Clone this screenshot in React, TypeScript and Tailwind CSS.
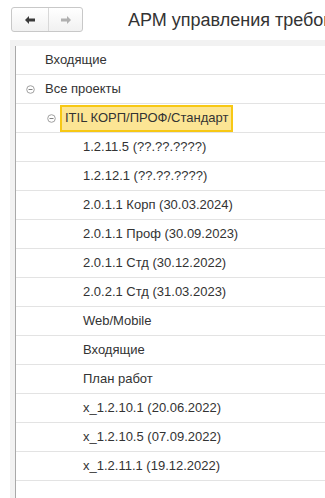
import React from 'react';

type Row = {
  label: string;
  level: number;
  toggle?: boolean;
  selected?: boolean;
};

const rows: Row[] = [
  { label: 'Входящие', level: 0 },
  { label: 'Все проекты', level: 0, toggle: true },
  { label: 'ITIL КОРП/ПРОФ/Стандарт', level: 1, toggle: true, selected: true },
  { label: '1.2.11.5 (??.??.????)', level: 2 },
  { label: '1.2.12.1 (??.??.????)', level: 2 },
  { label: '2.0.1.1 Корп (30.03.2024)', level: 2 },
  { label: '2.0.1.1 Проф (30.09.2023)', level: 2 },
  { label: '2.0.1.1 Стд (30.12.2022)', level: 2 },
  { label: '2.0.2.1 Стд (31.03.2023)', level: 2 },
  { label: 'Web/Mobile', level: 2 },
  { label: 'Входящие', level: 2 },
  { label: 'План работ', level: 2 },
  { label: 'x_1.2.10.1 (20.06.2022)', level: 2 },
  { label: 'x_1.2.10.5 (07.09.2022)', level: 2 },
  { label: 'x_1.2.11.1 (19.12.2022)', level: 2 },
];

const MinusCircle: React.FC = () => (
  <svg width="9" height="9" viewBox="0 0 9 9" className="shrink-0">
    <circle cx="4.5" cy="4.5" r="3.8" fill="white" stroke="#a0a0a0" strokeWidth="1" />
    <line x1="2.5" y1="4.5" x2="6.5" y2="4.5" stroke="#808080" strokeWidth="1" />
  </svg>
);

const Arrow: React.FC<{ dir: 'left' | 'right'; color: string }> = ({ dir, color }) => (
  <svg width="10" height="8" viewBox="0 0 10 8" style={{ transform: dir === 'right' ? 'scaleX(-1)' : undefined }}>
    <path d="M0 4 L4 0 L4 2.5 L10 2.5 L10 5.5 L4 5.5 L4 8 Z" fill={color} />
  </svg>
);

const App: React.FC = () => {
  return (
    <div className="w-[325px] h-[498px] overflow-hidden bg-white text-[#333] font-['Liberation_Sans',Arial,sans-serif]">
      {/* Header */}
      <div className="flex items-center h-[40px] pl-[11px]">
        <div className="flex h-[25px] w-[72px] shrink-0 mt-[-1px] rounded-[3px] border border-[#c8c8c8] bg-gradient-to-b from-white to-[#f1f1f1]">
          <div className="flex w-[37px] items-center justify-center border-r border-[#d8d8d8]">
            <Arrow dir="left" color="#3a3a3a" />
          </div>
          <div className="flex flex-1 items-center justify-center">
            <Arrow dir="right" color="#b0b0b0" />
          </div>
        </div>
        <div className="ml-[45px] min-w-0 overflow-hidden whitespace-nowrap text-[18px]">АРМ управления требованиями</div>
      </div>

      {/* Tree panel */}
      <div className="ml-[10px] h-[458px] bg-[#f2f2f2] pl-[5px] pt-[6px]">
        <div className="h-full border-l border-[#a9a9a9] bg-white">
          {rows.map((row, i) => (
            <div key={i} className="flex h-[29px] items-center border-b border-[#e3e3e3] text-[13px]">
              {row.level === 0 && (
                <div className="flex items-center">
                  <div className="flex w-[29px] justify-end pr-[10px]">{row.toggle && <MinusCircle />}</div>
                  <span>{row.label}</span>
                </div>
              )}
              {row.level === 1 && (
                <div className="flex items-center pl-[31px]">
                  <MinusCircle />
                  <span className="ml-[4px] flex h-[27px] items-center border-2 border-[#f7c815] bg-[#fce594] px-[3px]">
                    {row.label}
                  </span>
                </div>
              )}
              {row.level === 2 && <span className="pl-[67px]">{row.label}</span>}
            </div>
          ))}
        </div>
      </div>
    </div>
  );
};

export default App;
